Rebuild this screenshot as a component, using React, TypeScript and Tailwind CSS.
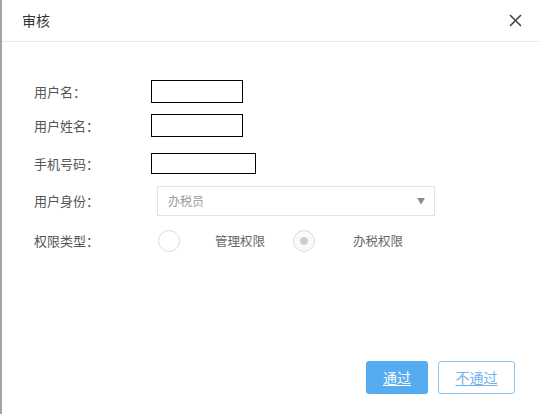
import React from 'react';

const font = { fontFamily: '"Noto Sans CJK SC", "Noto Sans", sans-serif' };

function Row({ label, children, className = '' }: { label: string; children: React.ReactNode; className?: string }) {
  return (
    <div className={`flex items-center ${className}`}>
      <div className="w-[151px] pl-[32px] text-[13px] text-[#555]">{label}</div>
      {children}
    </div>
  );
}

export default function App() {
  return (
    <div style={font} className="w-[539px] h-[414px] bg-white border-l-2 border-[#a3a3a3] flex flex-col overflow-hidden">
      <div className="h-[42px] flex items-center justify-between border-b border-[#e8e8e8] pl-[20px] pr-[16px]">
        <span className="text-[14px] text-[#333]">审核</span>
        <svg width="13" height="13" viewBox="0 0 13 13" className="mr-[1px]">
          <path d="M1 1 L12 12 M12 1 L1 12" stroke="#444" strokeWidth="1.6" />
        </svg>
      </div>

      <div className="flex flex-col pt-[38px]">
        <Row label="用户名：">
          <input className="w-[92px] h-[23px] border-[1.5px] border-black outline-none -ml-[2px]" />
        </Row>
        <Row label="用户姓名：" className="mt-[11px]">
          <input className="w-[92px] h-[23px] border-[1.5px] border-black outline-none -ml-[2px]" />
        </Row>
        <Row label="手机号码：" className="mt-[16px]">
          <input className="w-[105px] h-[21px] border-[1.5px] border-black outline-none -ml-[2px]" />
        </Row>
        <Row label="用户身份：" className="mt-[12px]">
          <div className="ml-[4px] w-[278px] h-[30px] border border-[#e3e3e3] flex items-center justify-between pl-[10px] pr-[9px]">
            <span className="text-[12px] text-[#999]">办税员</span>
            <span className="text-[8px] text-[#888]">▼</span>
          </div>
        </Row>
        <Row label="权限类型：" className="mt-[14px]">
          <div className="flex items-center ml-[5px]">
            <span className="w-[22px] h-[22px] rounded-full border border-[#ddd] bg-white" />
            <span className="ml-[35px] text-[12.5px] text-[#666]">管理权限</span>
            <span className="ml-[28px] w-[22px] h-[22px] rounded-full border border-[#ddd] bg-[#fafafa] flex items-center justify-center">
              <span className="w-[8px] h-[8px] rounded-full bg-[#d0d0d0]" />
            </span>
            <span className="ml-[38px] text-[12.5px] text-[#666]">办税权限</span>
          </div>
        </Row>
      </div>

      <div className="flex-1" />
      <div className="flex justify-end gap-[10px] pr-[24px] pb-[20px]">
        <button className="w-[62px] h-[33px] rounded-[3px] bg-[#55acf0] text-white text-[14px] underline underline-offset-2">
          通过
        </button>
        <button className="w-[77px] h-[33px] rounded-[3px] border border-[#8cc4f3] bg-white text-[#6fb0ee] text-[14px] underline underline-offset-2">
          不通过
        </button>
      </div>
    </div>
  );
}
